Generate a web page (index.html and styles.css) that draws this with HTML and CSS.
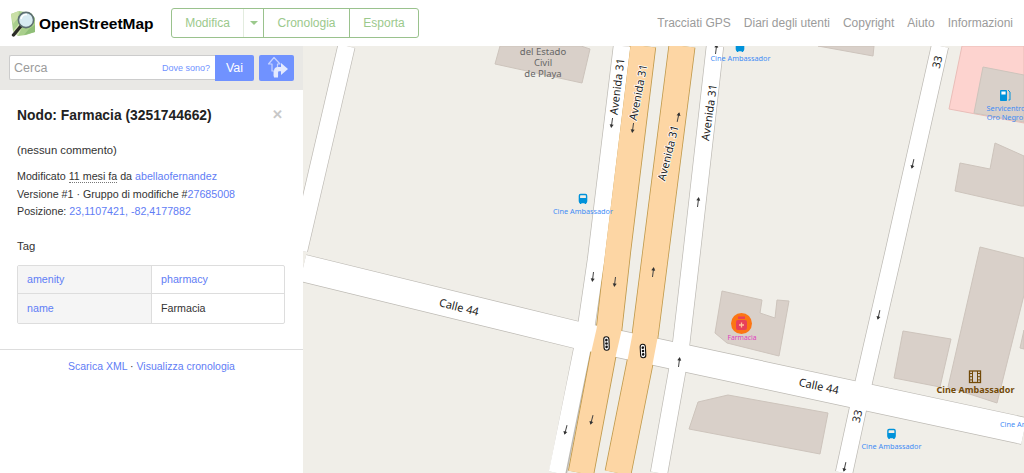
FILE: index.html
```html
<!DOCTYPE html>
<html lang="it">
<head>
  <meta charset="UTF-8" />
  <meta name="viewport" content="width=device-width, initial-scale=1" />
  <title>Nodo: Farmacia (3251744662) | OpenStreetMap</title>
  <link rel="stylesheet" href="styles.css">
</head>
<body>
  <header class="topbar">
    <a class="brand" href="#">
      <svg class="brand-logo" viewBox="0 0 26 27" width="26" height="27">
        <path d="M1 4 L9 1 L21 3 L25 8 L25 22 L16 25 L8 26 L3 21 Z" fill="#a9cf8c"/>
        <path d="M1 4 L9 1 L8 8 L3 14 Z" fill="#c9dfa6"/>
        <path d="M14 25 L25 22 L25 15 L19 19 Z" fill="#8fbe78"/>
        <path d="M3 21 L9 14 L12 17 L8 26 Z" fill="#d3e3b3"/>
        <line x1="11" y1="16" x2="3.5" y2="25" stroke="#2b2b26" stroke-width="3.4" stroke-linecap="round"/>
        <circle cx="16" cy="10" r="7.6" fill="#d7ebf2" stroke="#5d6f72" stroke-width="1.6"/>
        <path d="M11 9 A5.5 5.5 0 0 1 17 4.6" fill="none" stroke="#fff" stroke-width="1.6"/>
      </svg>
      <span class="brand-name">OpenStreetMap</span>
    </a>

    <nav class="btn-group">
      <a class="btn-item btn-edit" href="#">Modifica</a>
      <a class="btn-item btn-caret" href="#"><span class="caret"></span></a>
      <a class="btn-item btn-history" href="#">Cronologia</a>
      <a class="btn-item btn-export" href="#">Esporta</a>
    </nav>

    <nav class="secondary">
      <a href="#">Tracciati GPS</a>
      <a href="#">Diari degli utenti</a>
      <a href="#">Copyright</a>
      <a href="#">Aiuto</a>
      <a href="#">Informazioni</a>
    </nav>
  </header>

  <main class="content">
    <aside class="sidebar">
      <form class="search">
        <div class="search-box">
          <span class="search-input">Cerca</span>
          <a class="search-where" href="#">Dove sono?</a>
        </div>
        <button class="search-go" type="button">Vai</button>
        <button class="search-route" type="button">
          <svg viewBox="0 0 24 24" width="24" height="24">
            <path d="M9 1.5 L3.5 8 H7 V15 L9 15 V20 H12.5 V8 H15 Z" fill="#7092ff" stroke="#c6d3ff" stroke-width="1.2" stroke-linejoin="round"/>
            <path d="M9 21.5 V15 Q9 11 13 11 H16 V7 L23 13 L16 19 V15.2 H14 Q13 15.2 13 16.5 V21.5 Z" fill="#e4eaff"/>
          </svg>
        </button>
      </form>

      <section class="details">
        <div class="details-head">
          <h2>Nodo: Farmacia (3251744662)</h2>
          <span class="close">&#10005;</span>
        </div>
        <p class="comment">(nessun commento)</p>
        <p class="meta">
          Modificato <abbr>11 mesi fa</abbr> da <a href="#">abellaofernandez</a><br>
          Versione #1 · Gruppo di modifiche #<a href="#">27685008</a><br>
          Posizione: <a href="#">23,1107421, -82,4177882</a>
        </p>
        <h4>Tag</h4>
        <table class="tags">
          <tr>
            <th><a href="#">amenity</a></th>
            <td><a href="#">pharmacy</a></td>
          </tr>
          <tr>
            <th><a href="#">name</a></th>
            <td>Farmacia</td>
          </tr>
        </table>
      </section>

      <div class="secondary-actions">
        <a href="#">Scarica XML</a> · <a href="#">Visualizza cronologia</a>
      </div>
    </aside>

    <div class="map">
      <svg class="map-svg" viewBox="303 46 721 427" width="721" height="427">
        <defs>
          <g id="arrow">
            <path d="M0 -5 V4" stroke="#444" stroke-width="1" fill="none"/>
            <path d="M-2 -2.5 L0 -6 L2 -2.5 Z" fill="#333"/>
          </g>
          <g id="bus">
            <rect x="-3.6" y="-4.5" width="7.2" height="8" rx="1.2" fill="none" stroke="#0092da" stroke-width="1.4"/>
            <rect x="-3.6" y="-1" width="7.2" height="4.5" fill="#0092da"/>
            <rect x="-3.2" y="3.5" width="1.5" height="1.5" fill="#0092da"/>
            <rect x="1.7" y="3.5" width="1.5" height="1.5" fill="#0092da"/>
          </g>
          <g id="signal">
            <rect x="-2.6" y="-6.8" width="5.2" height="13.6" rx="2.6" fill="#fff" stroke="#111" stroke-width="1.1"/>
            <circle cy="-3.4" r="1.3" fill="#111"/>
            <circle r="1.3" fill="#111"/>
            <circle cy="3.4" r="1.3" fill="#111"/>
          </g>
        </defs>

        <rect class="land" x="303" y="46" width="721" height="427"/>
        <polygon class="fuel-area" points="962,46 1024,46 1024,123 949,109"/>

        <!-- buildings -->
        <polygon class="building" points="500,46 495,64 582,83 590,49 581,46"/>
        <polygon class="building" points="818,46 873,56 874,46"/>
        <polygon class="building" points="983,67 974,113 1024,122 1024,75"/>
        <polygon class="building" points="995,143 990,169 960,163 955,191 1021,206 1024,206 1024,156"/>
        <polygon class="building" points="980,247 948,387 997,403 1024,295 1024,258"/>
        <polygon class="building" points="1024,330 1020,348 1024,349"/>
        <polygon class="building" points="903,331 951,339 940,387 894,378"/>
        <polygon class="building" points="722,291 762,300 760,313 775,318 777,300 789,301 779,356 727,343 715,333"/>
        <polygon class="building" points="698,402 728,395 828,413 820,454 689,429"/>

        <!-- road casings -->
        <polyline class="casing w17" points="346.5,46 299,250"/>
        <polyline class="casing w27" points="303,268 577,335 1024,431"/>
        <polyline class="casing w17" points="622,46 596,260 585,335 558,473"/>
        <polyline class="casing w17" points="715,46 692,250 681,345 677,372 659,473"/>
        <polyline class="casing w17" points="940,46 893,255 864,381 844,473"/>
        <polyline class="casing-main w26" points="643,46 618,250 609,330 603,356 581,473"/>
        <polyline class="casing-main w27" points="682,46 656,250 645,336 639.5,365 618,473"/>

        <!-- road fills -->
        <polyline class="fill w17" points="346.5,46 299,250"/>
        <polyline class="fill w27" points="303,268 577,335 1024,431"/>
        <polyline class="fill w17" points="622,46 596,260 585,335 557,473"/>
        <polyline class="fill w17" points="715,46 692,250 681,345 677,372 659,473"/>
        <polyline class="fill w17" points="940,46 893,255 864,381 844,473"/>
        <polyline class="fill-main w26" points="643,46 618,250 609,330 603,356 581,473"/>
        <polyline class="fill-main w27" points="682,46 656,250 645,336 639.5,365 618,473"/>

        <!-- oneway arrows -->
        <use href="#arrow" transform="translate(612 122) rotate(188)"/>
        <use href="#arrow" transform="translate(593 276) rotate(187)"/>
        <use href="#arrow" transform="translate(566 429) rotate(195)"/>
        <use href="#arrow" transform="translate(633 127) rotate(188)"/>
        <use href="#arrow" transform="translate(615 281) rotate(187)"/>
        <use href="#arrow" transform="translate(592 419) rotate(195)"/>
        <use href="#arrow" transform="translate(653 273) rotate(7)"/>
        <use href="#arrow" transform="translate(678 118) rotate(12)"/>
        <use href="#arrow" transform="translate(716 50) rotate(7)"/>
        <use href="#arrow" transform="translate(698 203) rotate(7)"/>
        <use href="#arrow" transform="translate(679 363) rotate(7)"/>
        <use href="#arrow" transform="translate(913 163) rotate(193)"/>
        <use href="#arrow" transform="translate(879 314) rotate(193)"/>
        <use href="#arrow" transform="translate(845 466) rotate(193)"/>

        <use href="#signal" transform="translate(606.5 343.5) rotate(-2)"/>
        <use href="#signal" transform="translate(643 351) rotate(-3)"/>

        <!-- road names -->
        <text class="road-name" transform="translate(621 87) rotate(-83)" text-anchor="middle">Avenida 31</text>
        <text class="road-name" transform="translate(642 93) rotate(-79)" text-anchor="middle">Avenida 31</text>
        <text class="road-name" transform="translate(672 154) rotate(-76)" text-anchor="middle">Avenida 31</text>
        <text class="road-name" transform="translate(713 113) rotate(-82)" text-anchor="middle">Avenida 31</text>
        <text class="road-name" transform="translate(941 63) rotate(-76)" text-anchor="middle">33</text>
        <text class="road-name" transform="translate(861 417) rotate(-77)" text-anchor="middle">33</text>
        <text class="road-name" transform="translate(458 311) rotate(14)" text-anchor="middle">Calle 44</text>
        <text class="road-name" transform="translate(818 390) rotate(12)" text-anchor="middle">Calle 44</text>

        <!-- pois -->
        <text class="label-building" x="543" y="55" text-anchor="middle">del Estado</text>
        <text class="label-building" x="543" y="66" text-anchor="middle">Civil</text>
        <text class="label-building" x="543" y="77" text-anchor="middle">de Playa</text>

        <use href="#bus" transform="translate(583 199)"/>
        <text class="label-blue" x="583" y="214" text-anchor="middle">Cine Ambassador</text>
        <use href="#bus" transform="translate(740 47)"/>
        <text class="label-blue" x="740.5" y="61" text-anchor="middle">Cine Ambassador</text>
        <use href="#bus" transform="translate(891.5 434)"/>
        <text class="label-blue" x="891.5" y="449" text-anchor="middle">Cine Ambassador</text>
        <text class="label-blue" x="1000" y="427">Cine Ambassador</text>

        <rect x="1000" y="90" width="7" height="11" rx="0.8" fill="#0092da"/>
        <rect x="1001.4" y="91.5" width="4.2" height="3" fill="#fff"/>
        <path d="M1008 90 L1010 92 V100 H1008.5" fill="none" stroke="#0092da" stroke-width="1"/>
        <text class="label-blue" x="1006" y="111" text-anchor="middle">Servicentro</text>
        <text class="label-blue" x="1005" y="120" text-anchor="middle">Oro Negro</text>

        <circle cx="741.5" cy="323.5" r="10.5" fill="#ff6a00" opacity="0.9"/>
        <rect x="736" y="320" width="11" height="10" rx="2" fill="#e8405a"/>
        <rect x="738" y="316.5" width="7" height="2.4" fill="#e8405a"/>
        <path d="M741.5 322.5 V327.5 M739 325 H744" stroke="#ffc49a" stroke-width="1.3"/>
        <text class="label-pink" x="742" y="340" text-anchor="middle">Farmacia</text>

        <rect x="969.5" y="371" width="11" height="11.5" fill="none" stroke="#734a08" stroke-width="1.3"/>
        <path d="M972.5 371 V382.5 M977.5 371 V382.5" stroke="#734a08" stroke-width="1"/>
        <path d="M969.5 373.5 H972.5 M969.5 376.7 H972.5 M969.5 379.9 H972.5 M977.5 373.5 H980.5 M977.5 376.7 H980.5 M977.5 379.9 H980.5" stroke="#734a08" stroke-width="1"/>
        <text class="label-brown" x="975.5" y="393" text-anchor="middle">Cine Ambassador</text>
      </svg>
    </div>
  </main>
</body>
</html>
```

FILE: styles.css
```css
* {
  box-sizing: border-box;
}

html,
body {
  height: 100%;
  margin: 0;
  overflow: hidden;
}

body {
  display: flex;
  flex-direction: column;
  font-family: "Liberation Sans", Arial, sans-serif;
  font-size: 10.7px;
  line-height: 18px;
  color: #333;
  background: #fff;
}

a {
  color: #5f7df5;
  text-decoration: none;
}

/* Top bar */
.topbar {
  display: flex;
  align-items: center;
  flex: 0 0 46px;
  height: 46px;
  padding-left: 10px;
  background: #fff;
}

.brand {
  display: flex;
  align-items: center;
  gap: 3px;
  width: 161px;
  padding-top: 1px;
  color: #000;
}

.brand-logo {
  flex-shrink: 0;
}

.brand-name {
  font-size: 15.5px;
  font-weight: bold;
}

.btn-group {
  display: flex;
  height: 30px;
  border: 1px solid #9ac28d;
  border-radius: 3px;
}

.btn-item {
  display: flex;
  align-items: center;
  justify-content: center;
  font-size: 12px;
  color: #9bc98c;
  border-left: 1px solid #9ac28d;
}

.btn-edit {
  width: 71px;
  border-left: none;
}

.btn-caret {
  width: 20px;
  border-left: 1px solid #e3ecdf;
}

.caret {
  width: 0;
  height: 0;
  border-left: 4px solid transparent;
  border-right: 4px solid transparent;
  border-top: 4px solid #9bc98c;
}

.btn-history {
  width: 86px;
}

.btn-export {
  width: 69px;
}

.secondary {
  display: flex;
  gap: 13px;
  margin-left: auto;
  padding-right: 11px;
}

.secondary a {
  font-size: 12px;
  color: #9b9b9b;
}

/* Main area */
.content {
  display: flex;
  flex: 1;
  min-height: 0;
}

.sidebar {
  flex: 0 0 303px;
  background: #fff;
}

.search {
  display: flex;
  height: 44px;
  padding: 9px 9px 0;
  background: #e9e8e5;
}

.search-box {
  display: flex;
  align-items: center;
  justify-content: space-between;
  width: 206px;
  height: 25px;
  padding: 0 5px 0 4px;
  background: #fff;
  border: 1px solid #ccc;
  border-right: none;
  border-radius: 2px 0 0 2px;
}

.search-input {
  font-size: 12.5px;
  color: #9b9b9b;
}

.search-where {
  font-size: 9px;
  color: #7092ff;
}

.search-go {
  width: 39px;
  height: 26px;
  padding: 0;
  margin-top: 0;
  font-family: inherit;
  font-size: 12.5px;
  color: #fff;
  background: #7092ff;
  border: none;
  border-radius: 0 2px 2px 0;
}

.search-route {
  display: flex;
  align-items: center;
  justify-content: center;
  width: 35px;
  height: 26px;
  margin-left: 5px;
  padding: 0;
  background: #7092ff;
  border: none;
  border-radius: 2px;
}

.details {
  padding: 16px 17px 0;
}

.details-head {
  display: flex;
  align-items: center;
  justify-content: space-between;
  padding-right: 3px;
}

.details-head h2 {
  margin: 0;
  font-size: 13.85px;
  line-height: 18px;
  color: #222;
}

.close {
  font-size: 13px;
  font-weight: bold;
  color: #c8c8c8;
}

.comment {
  margin: 17px 0 0;
  font-size: 11.3px;
}

.meta {
  margin: 9px 0 0;
  line-height: 17.5px;
}

.meta abbr {
  border-bottom: 1px dotted #777;
}

h4 {
  margin: 16px 0 0;
  font-size: 11.3px;
  font-weight: normal;
}

.tags {
  width: 268px;
  margin-top: 10px;
  border-collapse: separate;
  border-spacing: 0;
  border: 1px solid #ddd;
  border-radius: 2px;
  table-layout: fixed;
}

.tags th,
.tags td {
  height: 28.5px;
  padding: 0 9px;
  font-weight: normal;
  text-align: left;
}

.tags th {
  width: 134px;
  background: #f5f5f5;
  border-right: 1px solid #ddd;
}

.tags tr:first-child th,
.tags tr:first-child td {
  border-bottom: 1px solid #ddd;
}

.secondary-actions {
  margin-top: 25px;
  padding-top: 7px;
  font-size: 10.5px;
  text-align: center;
  border-top: 1px solid #ddd;
}

/* Map */
.map {
  flex: 1;
  min-width: 0;
  overflow: hidden;
}

.map-svg {
  display: block;
}

.land {
  fill: #f0eee8;
}

.fuel-area {
  fill: #fdd3cf;
  stroke: #e9bdb8;
  stroke-width: 1;
}

.building {
  fill: #d9d0c9;
  stroke: #cdc4bc;
  stroke-width: 1;
}

.casing,
.casing-main,
.fill,
.fill-main {
  fill: none;
  stroke-linejoin: round;
}

.casing {
  stroke: #bdbab4;
}

.casing-main {
  stroke: #c09a4c;
}

.fill {
  stroke: #fff;
}

.fill-main {
  stroke: #fdd6a4;
}

.casing.w17 { stroke-width: 18px; }
.fill.w17 { stroke-width: 16.6px; }
.casing.w27 { stroke-width: 28px; }
.fill.w27 { stroke-width: 26.6px; }
.casing-main.w26 { stroke-width: 26.5px; }
.fill-main.w26 { stroke-width: 24.8px; }
.casing-main.w27 { stroke-width: 27px; }
.fill-main.w27 { stroke-width: 25.4px; }

.road-name,
.label-building,
.label-blue,
.label-pink,
.label-brown {
  font-family: "Noto Sans", "DejaVu Sans", sans-serif;
}

.road-name {
  font-size: 11px;
  fill: #222;
  stroke: #fff;
  stroke-width: 1.5px;
  paint-order: stroke;
}

.label-building {
  font-size: 9.5px;
  fill: #666;
}

.label-blue {
  font-size: 7.3px;
  fill: #3f8cf5;
}

.label-pink {
  font-size: 6.8px;
  fill: #e040c0;
}

.label-brown {
  font-size: 9px;
  font-weight: bold;
  fill: #734a08;
}
```
